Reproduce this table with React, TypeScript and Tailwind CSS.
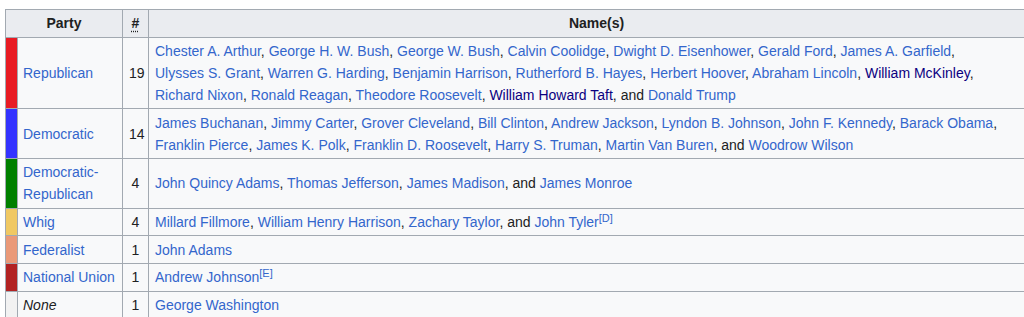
import React from "react";

type Row = {
    party: string;
    color: string;
    count: number;
    italic?: boolean;
    lines: React.ReactNode[];
};

const VISITED = new Set(["William McKinley", "William Howard Taft"]);

function Name({ children }: { children: string }) {
    return (
        <a href="#" className={VISITED.has(children) ? "text-[#0b0080]" : "text-[#3366cc]"}>
            {children}
        </a>
    );
}

function Note({ children }: { children: string }) {
    return <sup className="text-[11px] leading-none text-[#3366cc]">[{children}]</sup>;
}

// comma-separated list of linked names
function names(list: string[], last?: string) {
    return (
        <>
            {list.map((n, i) => (
                <React.Fragment key={n}>
                    <Name>{n}</Name>
                    {i < list.length - 1 || last !== undefined ? ", " : ""}
                </React.Fragment>
            ))}
            {last !== undefined && (
                <>
                    and <Name>{last}</Name>
                </>
            )}
        </>
    );
}

const ROWS: Row[] = [
    {
        party: "Republican",
        color: "bg-[#e81b23]",
        count: 19,
        lines: [
            <>{names(["Chester A. Arthur", "George H. W. Bush", "George W. Bush", "Calvin Coolidge", "Dwight D. Eisenhower", "Gerald Ford", "James A. Garfield"])},</>,
            <>{names(["Ulysses S. Grant", "Warren G. Harding", "Benjamin Harrison", "Rutherford B. Hayes", "Herbert Hoover", "Abraham Lincoln", "William McKinley"])},</>,
            names(["Richard Nixon", "Ronald Reagan", "Theodore Roosevelt", "William Howard Taft"], "Donald Trump"),
        ],
    },
    {
        party: "Democratic",
        color: "bg-[#3333ff]",
        count: 14,
        lines: [
            <>{names(["James Buchanan", "Jimmy Carter", "Grover Cleveland", "Bill Clinton", "Andrew Jackson", "Lyndon B. Johnson", "John F. Kennedy", "Barack Obama"])},</>,
            names(["Franklin Pierce", "James K. Polk", "Franklin D. Roosevelt", "Harry S. Truman", "Martin Van Buren"], "Woodrow Wilson"),
        ],
    },
    {
        party: "Democratic-\nRepublican",
        color: "bg-[#008000]",
        count: 4,
        lines: [names(["John Quincy Adams", "Thomas Jefferson", "James Madison"], "James Monroe")],
    },
    {
        party: "Whig",
        color: "bg-[#f0c862]",
        count: 4,
        lines: [
            <>
                {names(["Millard Fillmore", "William Henry Harrison", "Zachary Taylor"], "John Tyler")}
                <Note>D</Note>
            </>,
        ],
    },
    { party: "Federalist", color: "bg-[#ea9978]", count: 1, lines: [<Name>John Adams</Name>] },
    {
        party: "National Union",
        color: "bg-[#b22222]",
        count: 1,
        lines: [
            <>
                <Name>Andrew Johnson</Name>
                <Note>E</Note>
            </>,
        ],
    },
    { party: "None", color: "bg-[#f2f2f2]", count: 1, italic: true, lines: [<Name>George Washington</Name>] },
];

export default function App() {
    return (
        <div className="h-[317px] w-full overflow-hidden bg-white pl-[5px] pt-[9px] font-['Liberation_Sans',Arial,sans-serif] text-[14px] leading-[22px] text-[#202122]">
            <table className="w-[1040px] table-fixed border-collapse border border-[#a2a9b1] bg-[#f8f9fa]">
                <colgroup>
                    <col className="w-[12px]" />
                    <col className="w-[105px]" />
                    <col className="w-[26px]" />
                    <col />
                </colgroup>
                <thead>
                    <tr className="bg-[#eaecf0]">
                        <th colSpan={2} className="border border-[#a2a9b1] px-[6px] py-[2.35px] text-center font-bold">
                            Party
                        </th>
                        <th className="border border-[#a2a9b1] px-[6px] py-[2.35px] text-center font-bold">
                            <abbr className="cursor-help underline decoration-dotted underline-offset-2">#</abbr>
                        </th>
                        <th className="border border-[#a2a9b1] px-[6px] py-[2.35px] text-center font-bold">Name(s)</th>
                    </tr>
                </thead>
                <tbody>
                    {ROWS.map((r) => (
                        <tr key={r.party}>
                            <td className={`${r.color} border-y border-l border-[#a2a9b1] p-0`} />
                            <td className="border border-[#a2a9b1] py-[2.35px] pl-[5px] pr-[4px] whitespace-pre-line">
                                {r.italic ? <i>{r.party}</i> : <a href="#" className="text-[#3366cc]">{r.party}</a>}
                            </td>
                            <td className="border border-[#a2a9b1] px-[6px] py-[2.35px] text-center">{r.count}</td>
                            <td className="border border-[#a2a9b1] px-[6px] py-[2.35px] whitespace-nowrap">
                                {r.lines.map((l, i) => (
                                    <div key={i}>{l}</div>
                                ))}
                            </td>
                        </tr>
                    ))}
                </tbody>
            </table>
        </div>
    );
}
